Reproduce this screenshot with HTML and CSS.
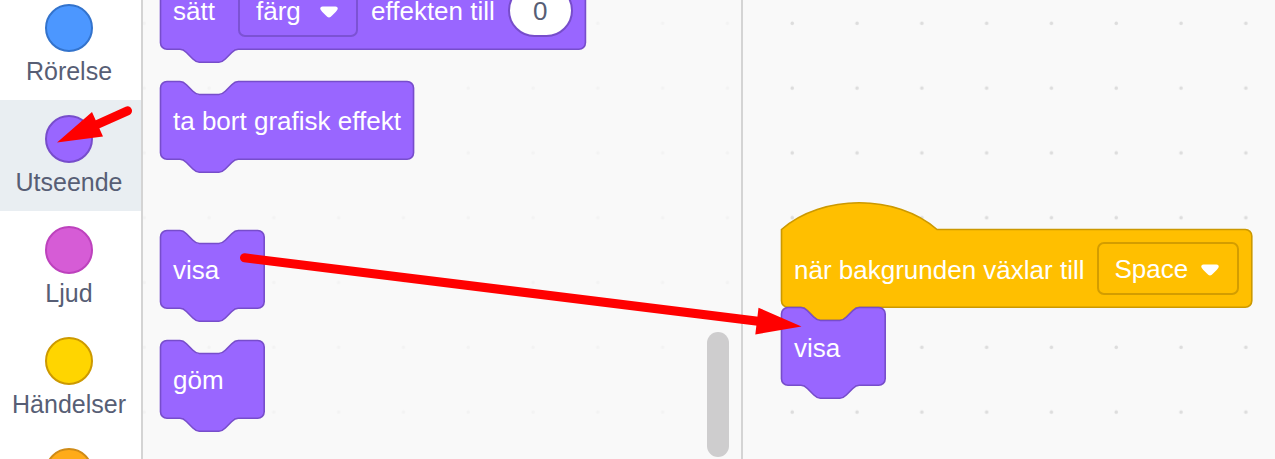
FILE: index.html
```html
<!DOCTYPE html>
<html lang="sv">
<head>
<meta charset="utf-8">
<title>Scratch</title>
<link rel="stylesheet" href="styles.css">
</head>
<body>
<div class="app">
  <nav class="categories">
    <button class="category"><span class="bubble motion"></span>Rörelse</button>
    <button class="category selected"><span class="bubble looks"></span>Utseende</button>
    <button class="category"><span class="bubble sound"></span>Ljud</button>
    <button class="category"><span class="bubble events"></span>Händelser</button>
    <button class="category" aria-label="Kontroll"><span class="bubble control"></span></button>
  </nav>
  <main class="editor">
    <svg class="grid" aria-hidden="true">
      <defs>
        <pattern id="dots" width="40" height="40" patternUnits="userSpaceOnUse" patternTransform="scale(1.62)">
          <circle cx="2" cy="14.4" r="1.1" fill="#ddd"/>
        </pattern>
      </defs>
      <rect width="100%" height="100%" fill="url(#dots)"/>
    </svg>
    <section class="flyout">
      <div class="block">
        <svg class="shape purple" aria-hidden="true"><path d="M0,4A4,4 0 0,1 4,0H12c2,0 3,1 4,2l4,4c1,1 2,2 4,2h12c2,0 3,-1 4,-2l4,-4c1,-1 2,-2 4,-2H258.3a4,4 0 0,1 4,4v40a4,4 0 0,1 -4,4H48c-2,0 -3,1 -4,2l-4,4c-1,1 -2,2 -4,2h-12c-2,0 -3,-1 -4,-2l-4,-4c-1,-1 -2,-2 -4,-2H4a4,4 0 0,1 -4,-4z"/></svg>
        <label class="text lead" for="effect">sätt</label>
        <span class="dropdown">
          <select id="effect"><option>färg</option></select>
          <svg class="caret" viewBox="0 0 18 12" aria-hidden="true"><path d="M2.500 .5H15.500Q18 .7 17.700 3Q17.500 4.500 10.800 10.700Q9 12.300 7.200 10.700Q.5 4.500 .3 3Q0 .7 2.500 .5Z"/></svg>
        </span>
        <label class="text" for="value">effekten till</label>
        <input class="number" id="value" type="text" value="0">
      </div>
      <div class="block">
        <svg class="shape purple" aria-hidden="true"><path d="M0,4A4,4 0 0,1 4,0H12c2,0 3,1 4,2l4,4c1,1 2,2 4,2h12c2,0 3,-1 4,-2l4,-4c1,-1 2,-2 4,-2H152.2a4,4 0 0,1 4,4v40a4,4 0 0,1 -4,4H48c-2,0 -3,1 -4,2l-4,4c-1,1 -2,2 -4,2h-12c-2,0 -3,-1 -4,-2l-4,-4c-1,-1 -2,-2 -4,-2H4a4,4 0 0,1 -4,-4z"/></svg>
        <span class="text">ta bort grafisk effekt</span>
      </div>
      <div class="block section-start">
        <svg class="shape purple" aria-hidden="true"><path d="M0,4A4,4 0 0,1 4,0H12c2,0 3,1 4,2l4,4c1,1 2,2 4,2h12c2,0 3,-1 4,-2l4,-4c1,-1 2,-2 4,-2H60a4,4 0 0,1 4,4v40a4,4 0 0,1 -4,4H48c-2,0 -3,1 -4,2l-4,4c-1,1 -2,2 -4,2h-12c-2,0 -3,-1 -4,-2l-4,-4c-1,-1 -2,-2 -4,-2H4a4,4 0 0,1 -4,-4z"/></svg>
        <span class="text">visa</span>
      </div>
      <div class="block">
        <svg class="shape purple" aria-hidden="true"><path d="M0,4A4,4 0 0,1 4,0H12c2,0 3,1 4,2l4,4c1,1 2,2 4,2h12c2,0 3,-1 4,-2l4,-4c1,-1 2,-2 4,-2H60a4,4 0 0,1 4,4v40a4,4 0 0,1 -4,4H48c-2,0 -3,1 -4,2l-4,4c-1,1 -2,2 -4,2h-12c-2,0 -3,-1 -4,-2l-4,-4c-1,-1 -2,-2 -4,-2H4a4,4 0 0,1 -4,-4z"/></svg>
        <span class="text">göm</span>
      </div>
      <div class="scrollbar"></div>
    </section>
    <section class="workspace">
      <div class="block event">
        <svg class="shape yellow" aria-hidden="true"><path d="M0,0c25,-22 71,-22 96,0H286.300a4,4 0 0,1 4,4v40a4,4 0 0,1 -4,4H48c-2,0 -3,1 -4,2l-4,4c-1,1 -2,2 -4,2h-12c-2,0 -3,-1 -4,-2l-4,-4c-1,-1 -2,-2 -4,-2H4a4,4 0 0,1 -4,-4z"/></svg>
        <label class="text" for="backdrop">när bakgrunden växlar till</label>
        <span class="dropdown">
          <select id="backdrop"><option>Space</option></select>
          <svg class="caret" viewBox="0 0 18 12" aria-hidden="true"><path d="M2.500 .5H15.500Q18 .7 17.700 3Q17.500 4.500 10.800 10.700Q9 12.300 7.200 10.700Q.5 4.500 .3 3Q0 .7 2.500 .5Z"/></svg>
        </span>
      </div>
      <div class="block">
        <svg class="shape purple" aria-hidden="true"><path d="M0,4A4,4 0 0,1 4,0H12c2,0 3,1 4,2l4,4c1,1 2,2 4,2h12c2,0 3,-1 4,-2l4,-4c1,-1 2,-2 4,-2H60a4,4 0 0,1 4,4v40a4,4 0 0,1 -4,4H48c-2,0 -3,1 -4,2l-4,4c-1,1 -2,2 -4,2h-12c-2,0 -3,-1 -4,-2l-4,-4c-1,-1 -2,-2 -4,-2H4a4,4 0 0,1 -4,-4z"/></svg>
        <span class="text">visa</span>
      </div>
    </section>
  </main>
  <svg class="arrows" aria-hidden="true">
    <path class="arrow-line" d="M127.500 110.800L96 125M244.500 257.800L760 321.500"/>
    <path class="arrow-head" d="M57 142.500L92 112L103 136.500ZM801.500 326.500L758.500 307.700L755.300 334.500Z"/>
  </svg>
</div>
</body>
</html>
```

FILE: styles.css
```css
* {
  box-sizing: border-box;
}

body {
  margin: 0;
  font-family: "Liberation Sans", Arial, sans-serif;
  font-size: 26px;
  line-height: 30px;
}

button,
select,
input {
  margin: 0;
  font: inherit;
}

.app {
  position: relative;
  display: flex;
  height: 100vh;
  overflow: hidden;
}

.categories {
  flex: none;
  display: flex;
  flex-direction: column;
  width: 141px;
  margin-top: -11px;
  background: #fff;
}

.category {
  flex: none;
  display: flex;
  flex-direction: column;
  align-items: center;
  gap: 4px;
  height: 111px;
  padding: 15px 3px 0 0;
  border: 0;
  background: none;
  color: #575e75;
  font-size: 25px;
}

.category.selected {
  background: #e9eef2;
}

.bubble {
  flex: none;
  width: 48px;
  height: 48px;
  border: 2px solid;
  border-radius: 50%;
}

.motion { background: #4c97ff; border-color: #3373cc; }
.looks { background: #9966ff; border-color: #774dcb; }
.sound { background: #d65cd6; border-color: #bd42bd; }
.events { background: #ffd500; border-color: #cc9900; }
.control { background: #ffab19; border-color: #cf8b17; }

.editor {
  position: relative;
  flex: 1;
  display: flex;
  min-width: 0;
  background: #f9f9f9;
}

.grid {
  position: absolute;
  inset: 0;
  width: 100%;
  height: 100%;
}

.flyout {
  position: relative;
  flex: none;
  display: flex;
  flex-direction: column;
  align-items: flex-start;
  gap: 32px;
  width: 602px;
  padding-left: 17px;
  border: solid #d4d4d4;
  border-width: 0 2px;
  background: rgba(249, 249, 249, 0.8);
}

.flyout .block:first-child {
  margin-top: -29px;
}

.section-start {
  margin-top: 39px;
}

.workspace {
  flex: 1;
  min-width: 0;
  padding: 229px 22px 0 38px;
}

.block {
  position: relative;
  flex: none;
  display: flex;
  align-items: center;
  gap: 13px;
  width: max-content;
  height: 78px;
  padding: 0 13px;
}

.workspace .text {
  padding-top: 4px;
}

.event {
  gap: 12px;
}

.shape {
  position: absolute;
  inset: 0;
  overflow: visible;
}

.shape path {
  transform: translate(0.5px, 0.5px) scale(1.62);
}

.purple { fill: #9966ff; stroke: #774dcb; }
.yellow { fill: #ffbf00; stroke: #cc9900; }

.text {
  position: relative;
  padding-top: 2px;
  color: #fff;
  white-space: nowrap;
}

.lead {
  min-width: 52px;
}

.dropdown {
  position: relative;
  display: flex;
}

select {
  appearance: none;
  min-width: 120px;
  height: 53px;
  padding: 2px 48px 0 16px;
  border: 2px solid #7c52d4;
  border-radius: 7px;
  background: #9966ff;
  color: #fff;
}

.event select {
  border-color: #d39d00;
  background: #ffbf00;
}

.caret {
  position: absolute;
  top: 22px;
  right: 20px;
  width: 18px;
  height: 12px;
  fill: #fff;
  pointer-events: none;
}

.number {
  position: relative;
  width: 65px;
  height: 53px;
  padding: 2px 0 0;
  border: 2px solid #774dcb;
  border-radius: 27px;
  background: #fff;
  color: #575e75;
  text-align: center;
}

.scrollbar {
  position: absolute;
  right: 12px;
  bottom: 2px;
  width: 22px;
  height: 125px;
  border-radius: 11px;
  background: #cecdce;
}

.arrows {
  position: absolute;
  inset: 0;
  width: 100%;
  height: 100%;
  pointer-events: none;
}

.arrow-line {
  fill: none;
  stroke: #f00;
  stroke-width: 9px;
  stroke-linecap: round;
}

.arrow-head {
  fill: #f00;
}
```
